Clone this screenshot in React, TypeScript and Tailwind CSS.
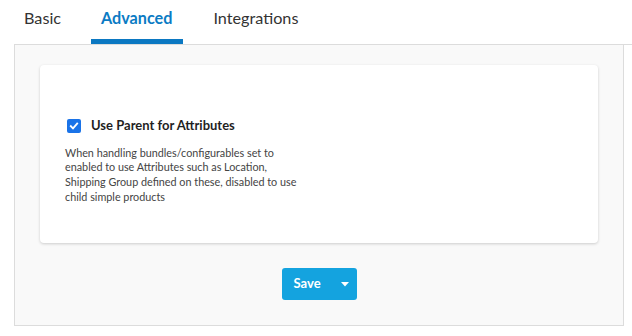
import React from "react";

export default function App() {
  return (
    <div className="w-[632px] h-[336px] bg-white overflow-hidden" style={{ fontFamily: "Lato, 'Open Sans', sans-serif" }}>
      <div className="ml-[14px]">
        <div className="flex h-[45px] gap-[20px] border-b border-[#dcdcdc]">
          <div className="px-[10px] pt-[6px] text-[16.2px] text-[#333333]">Basic</div>
          <div className="relative pl-[10px] pr-[11px] pt-[6px] text-[16.2px] font-bold text-[#0b7bc4]">
            Advanced
            <div className="absolute left-0 right-0 bottom-0 h-[5px] bg-[#0b78c2]" />
          </div>
          <div className="px-[10px] pt-[6px] text-[16.2px] text-[#333333]">Integrations</div>
        </div>
        <div className="mr-[8px] h-[281px] border-x border-b border-[#dcdcdc] bg-[#f9f9f9] pt-[20px] px-[25px]">
          <div className="h-[178px] rounded-[4px] bg-white shadow-[0_1px_3px_rgba(0,0,0,0.18)] pt-[51px] pl-[25px]">
            <div className="flex items-center gap-[10px] pl-[2px]">
              <div className="flex h-[14px] w-[14px] items-center justify-center rounded-[2px] bg-[#1a73e8]">
                <svg width="10" height="10" viewBox="0 0 12 12" fill="none">
                  <path d="M2.2 6.2 L4.8 8.8 L9.8 3.2" stroke="white" strokeWidth="2.2" strokeLinecap="square" />
                </svg>
              </div>
              <span className="text-[13px] font-bold text-[#1f1f1f]">Use Parent for Attributes</span>
            </div>
            <p className="mt-[10px] w-[234px] text-[10.8px] leading-[14.7px] text-[#444444]">
              When handling bundles/configurables set to enabled to use Attributes such as Location, Shipping Group defined on these, disabled to use child simple products
            </p>
          </div>
          <div className="mt-[25px] flex justify-center">
            <button className="flex h-[32px] w-[75px] items-center rounded-[3px] bg-[#14a3df] pl-[12px] text-[13px] font-bold text-white">
              <span>Save</span>
              <svg className="ml-[20px]" width="8" height="5" viewBox="0 0 8 5">
                <path d="M0 0 L8 0 L4 4.5 Z" fill="white" />
              </svg>
            </button>
          </div>
        </div>
      </div>
    </div>
  );
}
